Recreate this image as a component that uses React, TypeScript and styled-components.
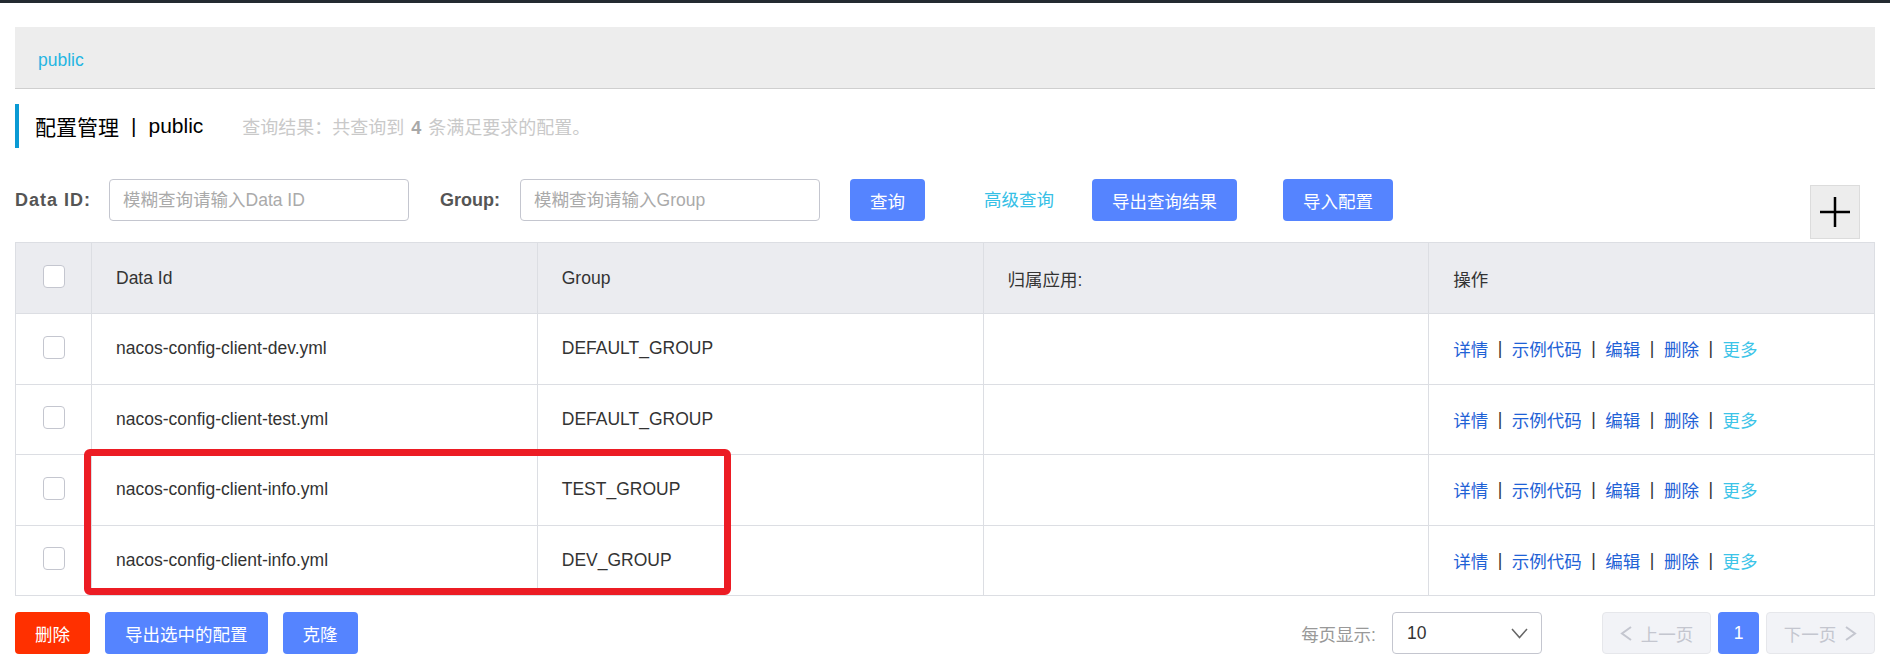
import React from "react";
import styled, { createGlobalStyle } from "styled-components";

const GlobalStyle = createGlobalStyle`
  html, body { margin: 0; padding: 0; background: #fff; }
  body {
    font-family: "Liberation Sans", Arial, "Noto Sans CJK SC", sans-serif;
    color: #333;
  }
  * { box-sizing: border-box; }
`;

const TopBar = styled.div`
  height: 3px;
  background: #232a31;
`;

const Main = styled.main`
  padding: 24px 15px 0;
`;

const Breadcrumb = styled.div`
  height: 62px;
  background: #ededed;
  border-bottom: 1px solid #cfcfcf;
  display: flex;
  align-items: center;
  padding: 6px 0 0 23px;
  font-size: 17.5px;
  color: #25b5e2;
`;

const TitleRow = styled.div`
  margin-top: 15px;
  height: 44px;
  border-left: 4px solid #0a9ad4;
  padding-left: 16px;
  display: flex;
  align-items: center;
`;

const TitleText = styled.span`
  font-size: 21px;
  color: #000;
`;

const TitleSep = styled.span`
  font-size: 21px;
  color: #000;
  margin: 0 12px;
`;

const Summary = styled.span`
  margin-left: 39px;
  font-size: 18px;
  color: #c9c9c9;
  b {
    color: #a8a8a8;
    font-weight: bold;
    margin: 0 7px;
  }
`;

const SearchRow = styled.div`
  margin-top: 31px;
  display: flex;
  align-items: flex-start;
`;

const Label = styled.label<{ $ml?: number; $mr: number; $ls?: number }>`
  font-size: 18px;
  font-weight: bold;
  color: #555;
  line-height: 42px;
  letter-spacing: ${(p) => p.$ls ?? 0}px;
  margin-left: ${(p) => p.$ml ?? 0}px;
  margin-right: ${(p) => p.$mr}px;
`;

const Input = styled.input`
  width: 300px;
  height: 42px;
  border: 1px solid #c4c6cf;
  border-radius: 4px;
  padding: 0 13px;
  font-size: 17.5px;
  font-family: inherit;
  color: #333;
  outline: none;
  &::placeholder { color: #aaa; }
`;

const Button = styled.button<{ $ml?: number; $danger?: boolean }>`
  height: 42px;
  padding: 0 20px;
  margin-left: ${(p) => p.$ml ?? 0}px;
  border: none;
  border-radius: 4px;
  background: ${(p) => (p.$danger ? "#ff3000" : "#5584ff")};
  color: #fff;
  font-size: 17.5px;
  font-family: inherit;
  cursor: pointer;
`;

const TextLink = styled.a<{ $ml?: number }>`
  margin-left: ${(p) => p.$ml ?? 0}px;
  line-height: 42px;
  font-size: 17.5px;
  color: #36c0e6;
  cursor: pointer;
`;

const PlusButton = styled.button`
  margin-left: auto;
  margin-right: 15px;
  margin-top: 6px;
  width: 50px;
  height: 54px;
  background: #ededed;
  border: 1px solid #dcdcdc;
  display: flex;
  align-items: center;
  justify-content: center;
  padding: 0;
  cursor: pointer;
`;

const TableWrap = styled.div`
  position: relative;
  margin-top: 3px;
`;

const Table = styled.div`
  display: grid;
  grid-template-columns: 76px repeat(4, 1fr);
  border-top: 1px solid #dcdee3;
  border-left: 1px solid #dcdee3;
`;

const Cell = styled.div<{ $head?: boolean; $center?: boolean }>`
  height: ${(p) => (p.$head ? "71px" : "70.5px")};
  background: ${(p) => (p.$head ? "#ebecf0" : "#fff")};
  border-right: 1px solid #dcdee3;
  border-bottom: 1px solid #dcdee3;
  display: flex;
  align-items: center;
  justify-content: ${(p) => (p.$center ? "center" : "flex-start")};
  padding: ${(p) => (p.$center ? "0" : "0 24px")};
  font-size: 17.5px;
  color: #333;
  white-space: nowrap;
`;

const Checkbox = styled.span`
  width: 22px;
  height: 23px;
  border: 1px solid #c4c6cf;
  border-radius: 4px;
  background: #fff;
  margin-top: -3px;
`;

const ActionLink = styled.a<{ $more?: boolean }>`
  color: ${(p) => (p.$more ? "#3cc4e8" : "#1f62d6")};
  cursor: pointer;
`;

const ActionSep = styled.span`
  color: #333;
  margin: 0 9.5px;
`;

const Highlight = styled.div`
  position: absolute;
  left: 69px;
  top: 207px;
  width: 647px;
  height: 146px;
  border: 7px solid #ec1c24;
  border-radius: 6px;
  pointer-events: none;
`;

const Footer = styled.div`
  margin-top: 16px;
  display: flex;
  align-items: center;
`;

const FooterButtons = styled.div`
  display: flex;
  gap: 15px;
`;

const Pager = styled.div`
  margin-left: auto;
  display: flex;
  align-items: center;
`;

const PagerLabel = styled.span`
  font-size: 17.5px;
  color: #999;
  margin-right: 16px;
`;

const Select = styled.div`
  width: 150px;
  height: 42px;
  border: 1px solid #c4c6cf;
  border-radius: 4px;
  display: flex;
  align-items: center;
  justify-content: space-between;
  padding: 0 13px 0 14px;
  font-size: 17.5px;
  color: #333;
  margin-right: 60px;
`;

const PageNav = styled.button`
  width: 109px;
  height: 42px;
  background: #f2f3f7;
  border: 1px solid #e6e7eb;
  border-radius: 4px;
  color: #c4c6cf;
  font-size: 17.5px;
  font-family: inherit;
  display: flex;
  align-items: center;
  justify-content: center;
  gap: 8px;
  padding: 0;
`;

const PageNum = styled.button`
  width: 41px;
  height: 42px;
  margin: 0 7px;
  background: #5584ff;
  border: none;
  border-radius: 4px;
  color: #fff;
  font-size: 17.5px;
  font-family: inherit;
  padding: 0;
`;

const Chevron = ({ dir }: { dir: "left" | "right" | "down" }) => {
  if (dir === "down") {
    return (
      <svg width="17" height="11" viewBox="0 0 17 11">
        <polyline points="1,1 8.5,9.5 16,1" fill="none" stroke="#666" strokeWidth="1.5" />
      </svg>
    );
  }
  const pts = dir === "left" ? "11,1 2,7.5 11,14" : "2,1 11,7.5 2,14";
  return (
    <svg width="13" height="15" viewBox="0 0 13 15">
      <polyline points={pts} fill="none" stroke="#c4c6cf" strokeWidth="2" />
    </svg>
  );
};

const rows = [
  ["nacos-config-client-dev.yml", "DEFAULT_GROUP"],
  ["nacos-config-client-test.yml", "DEFAULT_GROUP"],
  ["nacos-config-client-info.yml", "TEST_GROUP"],
  ["nacos-config-client-info.yml", "DEV_GROUP"],
];

const actions = ["详情", "示例代码", "编辑", "删除"];

export default function App() {
  return (
    <>
      <GlobalStyle />
      <TopBar />
      <Main>
        <Breadcrumb>public</Breadcrumb>
        <TitleRow>
          <TitleText>配置管理</TitleText>
          <TitleSep>|</TitleSep>
          <TitleText>public</TitleText>
          <Summary>
            查询结果：共查询到<b>4</b>条满足要求的配置。
          </Summary>
        </TitleRow>
        <SearchRow>
          <Label $mr={18} $ls={1}>Data ID:</Label>
          <Input placeholder="模糊查询请输入Data ID" />
          <Label $ml={31} $mr={20}>Group:</Label>
          <Input placeholder="模糊查询请输入Group" />
          <Button $ml={30}>查询</Button>
          <TextLink $ml={59}>高级查询</TextLink>
          <Button $ml={38}>导出查询结果</Button>
          <Button $ml={46}>导入配置</Button>
          <PlusButton aria-label="add">
            <svg width="30" height="30" viewBox="0 0 30 30">
              <line x1="15" y1="0" x2="15" y2="30" stroke="#000" strokeWidth="2.5" />
              <line x1="0" y1="15" x2="30" y2="15" stroke="#000" strokeWidth="2.5" />
            </svg>
          </PlusButton>
        </SearchRow>
        <TableWrap>
          <Table>
            <Cell $head $center>
              <Checkbox />
            </Cell>
            <Cell $head>Data Id</Cell>
            <Cell $head>Group</Cell>
            <Cell $head>归属应用:</Cell>
            <Cell $head>操作</Cell>
            {rows.map(([id, group], i) => (
              <React.Fragment key={i}>
                <Cell $center>
                  <Checkbox />
                </Cell>
                <Cell>{id}</Cell>
                <Cell>{group}</Cell>
                <Cell />
                <Cell>
                  {actions.map((a) => (
                    <React.Fragment key={a}>
                      <ActionLink>{a}</ActionLink>
                      <ActionSep>|</ActionSep>
                    </React.Fragment>
                  ))}
                  <ActionLink $more>更多</ActionLink>
                </Cell>
              </React.Fragment>
            ))}
          </Table>
          <Highlight />
        </TableWrap>
        <Footer>
          <FooterButtons>
            <Button $danger>删除</Button>
            <Button>导出选中的配置</Button>
            <Button>克隆</Button>
          </FooterButtons>
          <Pager>
            <PagerLabel>每页显示:</PagerLabel>
            <Select>
              <span>10</span>
              <Chevron dir="down" />
            </Select>
            <PageNav>
              <Chevron dir="left" />
              上一页
            </PageNav>
            <PageNum>1</PageNum>
            <PageNav>
              下一页
              <Chevron dir="right" />
            </PageNav>
          </Pager>
        </Footer>
      </Main>
    </>
  );
}
